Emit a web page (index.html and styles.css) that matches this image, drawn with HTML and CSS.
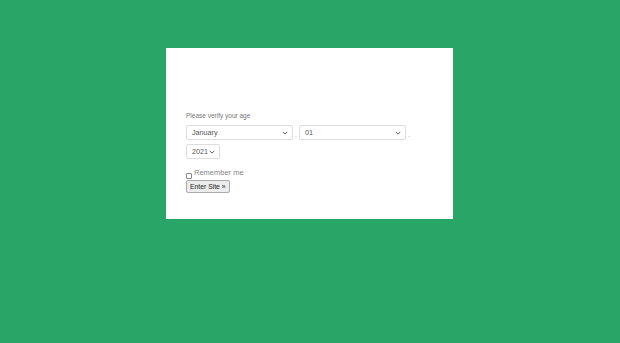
FILE: index.html
```html
<!DOCTYPE html>
<html>
<head>
<meta charset="utf-8">
<link rel="stylesheet" href="styles.css">
</head>
<body>
<div class="page">
  <div class="card">
    <div class="logo-space"></div>
    <p class="prompt">Please verify your age</p>
    <div class="row">
      <div class="sel sel-wide"><span>January</span><svg class="chev" viewBox="0 0 8 5" width="6" height="4"><path d="M1 1l3 3 3-3" fill="none" stroke="#555" stroke-width="1.3"/></svg></div>
      <span class="dot">.</span>
      <div class="sel sel-wide"><span>01</span><svg class="chev" viewBox="0 0 8 5" width="6" height="4"><path d="M1 1l3 3 3-3" fill="none" stroke="#555" stroke-width="1.3"/></svg></div>
      <span class="dot">.</span>
    </div>
    <div class="row row-year">
      <div class="sel sel-year"><span>2021</span><svg class="chev" viewBox="0 0 8 5" width="6" height="4"><path d="M1 1l3 3 3-3" fill="none" stroke="#555" stroke-width="1.3"/></svg></div>
    </div>
    <label class="remember"><span class="box"></span><span class="rtext">Remember me</span></label>
    <button class="enter">Enter Site »</button>
  </div>
</div>
</body>
</html>
```
FILE: styles.css
```css
html, body {
  margin: 0;
  padding: 0;
  background: #29a567;
  font-family: "Liberation Sans", Arial, sans-serif;
}
.page {
  padding: 48px 1px 0 0;
}
.card {
  width: 247px;
  height: 171px;
  margin: 0 auto;
  padding: 0 20px;
  background: #fff;
}
.logo-space {
  height: 64px;
}
.prompt {
  margin: 0;
  font-size: 6.5px;
  line-height: 8px;
  color: #777;
}
.row {
  display: flex;
  align-items: center;
  margin-top: 5px;
}
.row-year {
  margin-top: 4px;
}
.sel {
  display: flex;
  align-items: center;
  justify-content: space-between;
  box-sizing: border-box;
  height: 15px;
  border: 1px solid #dedede;
  border-radius: 2px;
  padding: 0 4px 0 5px;
  font-size: 7.2px;
  color: #555;
  background: #fff;
}
.sel-wide {
  width: 107px;
}
.sel-year {
  width: 34px;
}
.chev {
  display: block;
}
.dot {
  width: 6px;
  text-align: center;
  font-size: 7px;
  color: #aaa;
  padding-top: 4px;
}
.remember {
  display: flex;
  align-items: flex-end;
  margin-top: 11px;
  height: 9px;
}
.box {
  box-sizing: border-box;
  width: 6px;
  height: 6px;
  border: 1px solid #888;
  border-radius: 1px;
  margin-right: 2px;
  background: #fff;
}
.rtext {
  font-size: 7.5px;
  line-height: 9px;
  color: #888;
  position: relative;
  top: -2px;
}
.enter {
  display: block;
  margin: 1px 0 0;
  padding: 0 3px;
  height: 13px;
  font-family: "Liberation Sans", Arial, sans-serif;
  font-size: 6.8px;
  color: #222;
  background: #ececec;
  border: 1px solid #aaa;
  border-radius: 2px;
}
```
